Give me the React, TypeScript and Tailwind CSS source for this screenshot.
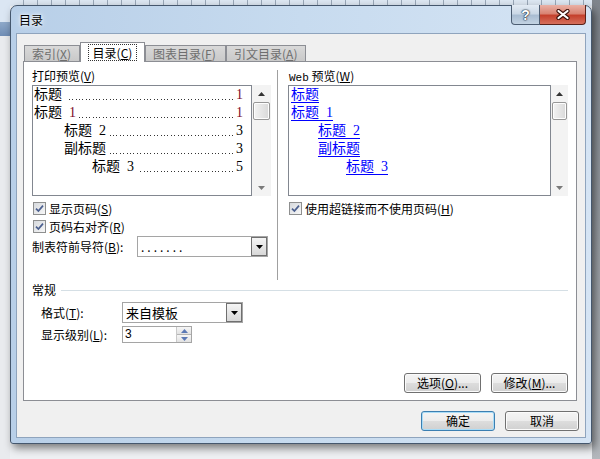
import React from 'react';

const MAROON = 'text-[#7b0a2a]';

const Mn: React.FC<{ k: string }> = ({ k }) => (
  <span>
    (<span className="underline underline-offset-[1px]">{k}</span>)
  </span>
);

const CheckBox: React.FC = () => (
  <span className="flex h-[13px] w-[13px] shrink-0 items-center justify-center border border-[#8e8f8f] bg-gradient-to-br from-[#d6d9dd] to-[#f7f7f7]">
    <svg width="9" height="9" viewBox="0 0 9 9">
      <path d="M1 4.6 L3.4 7 L8 1.6" fill="none" stroke="#4b5f8f" strokeWidth="1.7" />
    </svg>
  </span>
);

const ScrollBar: React.FC<{ className: string }> = ({ className }) => (
  <div className={`flex shrink-0 flex-col bg-[#f3f3f3] ${className}`}>
    <div className="flex h-[17px] items-center justify-center">
      <svg width="7" height="4" viewBox="0 0 7 4">
        <path d="M3.5 0 L7 4 H0 Z" fill="#333" />
      </svg>
    </div>
    <div className="mx-px h-[18px] rounded-[2px] border border-[#979797] bg-gradient-to-r from-[#f3f3f3] to-[#d9d9d9] shadow-[inset_0_0_0_1px_#fdfdfd]" />
    <div className="flex-1" />
    <div className="flex h-[17px] items-center justify-center">
      <svg width="7" height="4" viewBox="0 0 7 4">
        <path d="M0 0 H7 L3.5 4 Z" fill="#7a7a7a" />
      </svg>
    </div>
  </div>
);

const Combo: React.FC<{ className: string; children: React.ReactNode }> = ({ className, children }) => (
  <div className={`flex border border-[#a5a5a5] bg-white ${className}`}>
    <div className="flex flex-1 items-center overflow-hidden whitespace-nowrap pl-[3px]">{children}</div>
    <div className="flex w-[16px] items-center justify-center border border-[#6f6f6f] bg-gradient-to-b from-[#f4f4f4] to-[#d8d8d8]">
      <svg width="7" height="4" viewBox="0 0 7 4">
        <path d="M0 0 H7 L3.5 4 Z" fill="#000" />
      </svg>
    </div>
  </div>
);

const Btn: React.FC<{ className: string; primary?: boolean; children: React.ReactNode }> = ({ className, primary, children }) => (
  <div
    className={`flex items-center justify-center rounded-[3px] border leading-none bg-[linear-gradient(#f4f4f4_0%,#ececec_50%,#dddddd_51%,#d0d0d0_100%)] ${
      primary ? 'border-[#3c7fb1] shadow-[inset_0_0_0_1px_#a9dcf7]' : 'border-[#707070] shadow-[inset_0_0_0_1px_#fbfbfb]'
    } ${className}`}
  >
    {children}
  </div>
);

// leader dots drawn as a 1px dotted rule, aligned to the page number
const PrintRow: React.FC<{ indent: string; label: React.ReactNode; page: React.ReactNode; gap?: boolean }> = ({ indent, label, page, gap }) => (
  <div className={`flex h-[18px] whitespace-nowrap pr-[8px] leading-[18px] ${indent}`}>
    <span className="shrink-0">{label}</span>
    <span
      className={`mb-[4px] h-px min-w-0 flex-1 self-end bg-[repeating-linear-gradient(270deg,#333_0_1px,transparent_1px_3.4px)] ${
        gap ? 'ml-[4px]' : 'ml-px'
      }`}
    />
    <span className="ml-[3px] shrink-0">{page}</span>
  </div>
);

const WebRow: React.FC<{ indent: string; children: React.ReactNode }> = ({ indent, children }) => (
  <div className={`h-[18px] whitespace-nowrap leading-[18px] ${indent}`}>
    <span className="text-[#0000ff] underline underline-offset-[3px]">{children}</span>
  </div>
);

const Tab: React.FC<{ className: string; children: React.ReactNode }> = ({ className, children }) => (
  <div className={`flex h-[16px] items-center border border-b-0 border-[#8c8e94] bg-gradient-to-b from-[#d9d9d9] to-[#c9c9c9] pl-[7px] text-[#6e6e6e] ${className}`}>
    {children}
  </div>
);

export default function App() {
  return (
    <div className="relative h-[459px] w-[600px] overflow-hidden bg-[#eef0f3] font-['Noto_Sans_CJK_SC',sans-serif] text-[12px] text-black">
      {/* Word window behind the dialog */}
      <div className="flex h-full">
        <div className="flex w-[10px] flex-col">
          <div className="h-[22px] bg-[#dbe6f3]" />
          <div className="h-[14px] bg-gradient-to-b from-[#8fa9c9] to-[#6f8db5]" />
          <div className="flex-1 bg-[#e9ebee]" />
        </div>
        <div className="flex flex-1 flex-col">
          <div className="h-[6px] bg-[#dde7f2] bg-[repeating-linear-gradient(90deg,transparent_0_13px,#9aa8b8_13px_14px)]" />
          <div className="flex-1" />
        </div>
        <div className="w-[8px] bg-gradient-to-b from-[#7f858c] to-[#b3b7bc]" />
      </div>

      {/* dialog window */}
      <div className="absolute left-[10px] top-[5px] flex h-[439px] w-[582px] flex-col rounded-t-[7px] rounded-b-[3px] border border-[#45576d] bg-gradient-to-r from-[#b8cfe8] via-[#c7dbef] to-[#d5e4f4] shadow-[3px_4px_9px_rgba(0,0,0,0.5)]">
        {/* title bar */}
        <div className="flex h-[27px] items-start justify-between">
          <span className="ml-[8px] mt-[7px] leading-[14px] [text-shadow:0_0_6px_#fff,0_0_3px_#fff]">目录</span>
          <div className="-mt-px mr-[5px] flex">
            <div className="flex h-[20px] w-[29px] items-center justify-center rounded-bl-[4px] border border-t-0 border-[#4c5d72] bg-[linear-gradient(#e3ebf4_0%,#cbd8e6_45%,#a9bdd2_55%,#c3d3e3_100%)]">
              <span className="font-['Liberation_Sans',sans-serif] text-[14px] font-bold leading-none text-white [text-shadow:0_0_1px_#1c2a3a,0_0_1px_#1c2a3a,0_0_2px_#1c2a3a]">?</span>
            </div>
            <div className="flex h-[20px] w-[46px] items-center justify-center rounded-br-[4px] border border-l-0 border-t-0 border-[#5a2219] bg-[linear-gradient(#eab1a6_0%,#d98473_45%,#c5412d_55%,#d6705c_100%)]">
              <svg width="14" height="11" viewBox="0 0 14 11">
                <path d="M2.5 2 L11.5 9 M11.5 2 L2.5 9" stroke="#3b100a" strokeWidth="4.2" strokeLinecap="round" />
                <path d="M2.5 2 L11.5 9 M11.5 2 L2.5 9" stroke="#fff" strokeWidth="2.2" strokeLinecap="round" />
              </svg>
            </div>
          </div>
        </div>

        {/* client area */}
        <div className="mx-[5px] flex h-[405px] flex-col border border-[#8fa4bd] bg-[#f0f0f0]">
          {/* tabs */}
          <div className="ml-[7px] mt-[7px] flex h-[20px] items-end">
            <Tab className="w-[56px]">
              索引<Mn k="X" />
            </Tab>
            <div className="relative z-10 -mb-px flex h-[20px] w-[65px] items-center justify-center border border-b-0 border-[#8c8e94] bg-white">
              <span className="border border-dotted border-[#333] px-[4px] leading-[15px]">
                目录<Mn k="C" />
              </span>
            </div>
            <Tab className="w-[81px]">
              图表目录<Mn k="F" />
            </Tab>
            <Tab className="w-[80px]">
              引文目录<Mn k="A" />
            </Tab>
          </div>

          {/* tab panel */}
          <div className="ml-[6px] flex h-[340px] w-[554px] flex-col border border-[#8c8e94] bg-white pl-[8px] pr-[8px] pt-[6px]">
            <div className="flex h-[212px]">
              {/* print preview */}
              <div className="flex w-[239px] shrink-0 flex-col">
                <div className="h-[16px] leading-[16px]">
                  打印预览<Mn k="V" />
                </div>
                <div className="mt-px flex h-[111px]">
                  <div className="min-w-0 flex-1 overflow-hidden border border-[#828790] bg-white pl-px font-['Liberation_Serif','Noto_Sans_CJK_SC',serif] text-[14px]">
                    <PrintRow indent="" label="标题" page={<span className={MAROON}>1</span>} gap />
                    <PrintRow
                      indent=""
                      label={
                        <>
                          标题{'\u00a0\u00a0'}
                          <span className={MAROON}>1</span>
                        </>
                      }
                      page={<span className={MAROON}>1</span>}
                    />
                    <PrintRow indent="pl-[30px]" label={<>标题{'\u00a0\u00a0'}2</>} page="3" gap />
                    <PrintRow indent="pl-[30px]" label="副标题" page="3" gap />
                    <PrintRow indent="pl-[58px]" label={<>标题{'\u00a0\u00a0'}3</>} page="5" gap />
                  </div>
                  <ScrollBar className="w-[19px]" />
                </div>
                <div className="mt-[6px] flex h-[13px] items-center gap-[3px] pl-px">
                  <CheckBox />
                  <span className="leading-[13px]">
                    显示页码<Mn k="S" />
                  </span>
                </div>
                <div className="mt-[5px] flex h-[13px] items-center gap-[3px] pl-px">
                  <CheckBox />
                  <span className="leading-[13px]">
                    页码右对齐<Mn k="R" />
                  </span>
                </div>
                <div className="mt-[3px] flex h-[21px] items-center">
                  <span className="w-[105px]">
                    制表符前导符<Mn k="B" />:
                  </span>
                  <Combo className="h-[21px] w-[131px]">
                    <span className="tracking-[3px]">.......</span>
                  </Combo>
                </div>
              </div>

              <div className="ml-[6px] mt-[2px] h-[210px] w-px shrink-0 bg-[#a0a0a0]" />

              {/* web preview */}
              <div className="ml-[10px] flex w-[280px] shrink-0 flex-col">
                <div className="h-[16px] pl-px leading-[16px]">
                  <span className="font-['Liberation_Mono',monospace] text-[11px]">Web</span> 预览<Mn k="W" />
                </div>
                <div className="mt-px flex h-[111px]">
                  <div className="min-w-0 flex-1 overflow-hidden border border-[#828790] bg-white pl-[2px] font-['Liberation_Serif','Noto_Sans_CJK_SC',serif] text-[14px]">
                    <WebRow indent="">标题</WebRow>
                    <WebRow indent="">标题{'\u00a0\u00a0'}1</WebRow>
                    <WebRow indent="pl-[27px]">标题{'\u00a0\u00a0'}2</WebRow>
                    <WebRow indent="pl-[27px]">副标题</WebRow>
                    <WebRow indent="pl-[55px]">标题{'\u00a0\u00a0'}3</WebRow>
                  </div>
                  <ScrollBar className="w-[17px]" />
                </div>
                <div className="mt-[6px] flex h-[13px] items-center gap-[3px] pl-px">
                  <CheckBox />
                  <span className="leading-[13px]">
                    使用超链接而不使用页码<Mn k="H" />
                  </span>
                </div>
              </div>
            </div>

            {/* general */}
            <div className="mt-[3px] flex h-[14px] items-center leading-[14px]">
              <span>常规</span>
              <div className="ml-[5px] h-px flex-1 bg-[#d5dfe5]" />
            </div>
            <div className="mt-[5px] flex h-[21px] items-center pl-[9px]">
              <span className="w-[81px]">
                格式<Mn k="T" />:
              </span>
              <Combo className="h-[21px] w-[121px]">
                <span className="text-[13px]">来自模板</span>
              </Combo>
            </div>
            <div className="mt-[3px] flex h-[17px] items-center pl-[9px]">
              <span className="w-[81px]">
                显示级别<Mn k="L" />:
              </span>
              <div className="flex h-[17px] w-[70px] border border-[#a5a5a5] bg-white">
                <div className="flex-1 pl-[2px] font-['Liberation_Sans',sans-serif] leading-[15px]">3</div>
                <div className="flex w-[15px] flex-col border-l border-[#c9c9c9]">
                  <div className="flex flex-1 items-center justify-center border-b border-[#b5b5b5] bg-gradient-to-b from-[#f6f6f6] to-[#e2e2e2]">
                    <svg width="7" height="4" viewBox="0 0 7 4">
                      <path d="M3.5 0 L7 4 H0 Z" fill="#5b79b5" />
                    </svg>
                  </div>
                  <div className="flex flex-1 items-center justify-center bg-gradient-to-b from-[#f6f6f6] to-[#e2e2e2]">
                    <svg width="7" height="4" viewBox="0 0 7 4">
                      <path d="M0 0 H7 L3.5 4 Z" fill="#5b79b5" />
                    </svg>
                  </div>
                </div>
              </div>
            </div>
            <div className="mt-[30px] flex justify-end gap-[10px]">
              <Btn className="h-[20px] w-[77px]">
                选项<Mn k="O" />...
              </Btn>
              <Btn className="h-[20px] w-[77px]">
                修改<Mn k="M" />...
              </Btn>
            </div>
          </div>

          {/* dialog buttons */}
          <div className="mt-[10px] flex justify-end gap-[10px] pr-[6px]">
            <Btn primary className="h-[20px] w-[74px]">
              确定
            </Btn>
            <Btn className="h-[20px] w-[74px]">取消</Btn>
          </div>
        </div>
      </div>
    </div>
  );
}
